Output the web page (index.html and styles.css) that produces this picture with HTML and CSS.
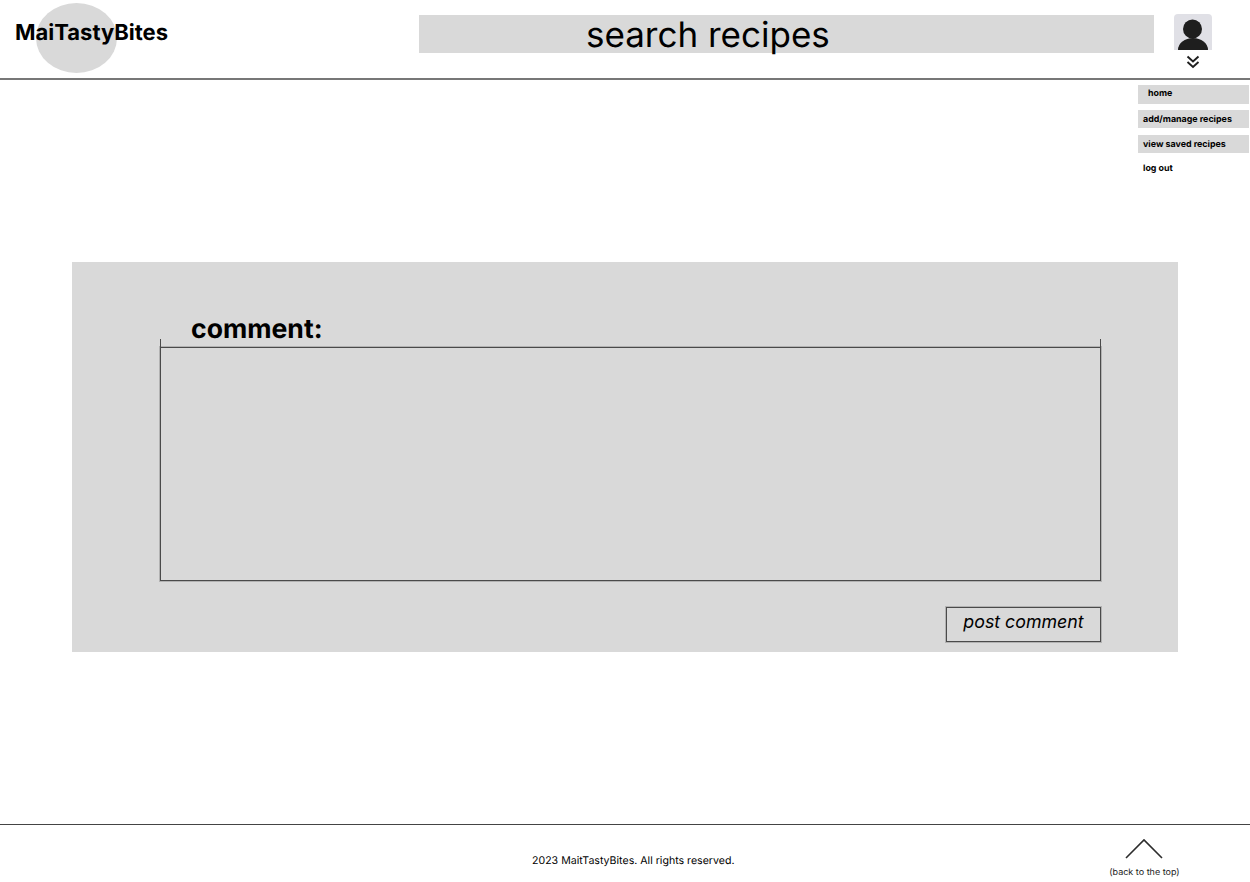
FILE: index.html
```html
<!DOCTYPE html>
<html lang="en">
  <head>
    <meta charset="UTF-8" />
    <title>MaiTastyBites</title>
    <link rel="stylesheet" href="styles.css">
  </head>
  <body>
    <header>
      <div class="logo">
        <span class="logo-circle"></span>
        <h1>MaiTastyBites</h1>
      </div>
      <div class="search">search recipes</div>
      <div class="account">
        <div class="avatar">
          <svg width="38" height="36" viewBox="0 0 38 36">
            <circle cx="18.5" cy="15" r="9.5" fill="#1e1e1e" />
            <path d="M4 36 A15 12 0 0 1 34 36 Z" fill="#1e1e1e" />
          </svg>
        </div>
        <svg class="chevrons" width="14" height="14" viewBox="0 0 14 14" fill="none" stroke="#1e1e1e" stroke-width="1.9">
          <path d="M1.5 1.5 L7 6.5 L12.5 1.5" />
          <path d="M1.5 7 L7 12 L12.5 7" />
        </svg>
      </div>
    </header>

    <nav class="menu">
      <a class="menu-item menu-home">home</a>
      <a class="menu-item">add/manage recipes</a>
      <a class="menu-item">view saved recipes</a>
      <a class="menu-item menu-plain">log out</a>
    </nav>

    <main>
      <section class="panel">
        <h2>comment:</h2>
        <div class="comment-box"></div>
        <div class="panel-actions">
          <button>post comment</button>
        </div>
      </section>
    </main>

    <footer>
      <p class="copyright">2023 MaitTastyBites. All rights reserved.</p>
      <a class="back-top">
        <svg width="38" height="21" viewBox="0 0 38 21" fill="none" stroke="#2c2c2c" stroke-width="1.6">
          <path d="M1 20 L19 2 L37 20" />
        </svg>
        <span>(back to the top)</span>
      </a>
    </footer>
  </body>
</html>
```

FILE: styles.css
```css
* {
  margin: 0;
  padding: 0;
  box-sizing: border-box;
}

body {
  font-family: Inter, "Liberation Sans", sans-serif;
  text-rendering: geometricPrecision;
  background-color: #fff;
  color: #000;
  height: 100vh;
  overflow: hidden;
  display: flex;
  flex-direction: column;
  position: relative;
}

header {
  height: 80px;
  flex-shrink: 0;
  border-bottom: 2px solid #777;
  display: flex;
  position: relative;
}

.logo {
  width: 419px;
  position: relative;
  flex-shrink: 0;
  padding: 18px 0 0 15px;
}

.logo-circle {
  position: absolute;
  left: 36px;
  top: 3px;
  width: 81px;
  height: 70px;
  border-radius: 50%;
  background-color: #d9d9d9;
}

h1 {
  position: relative;
  font-size: 22px;
  line-height: 30px;
  font-weight: 700;
}

.search {
  width: 735px;
  height: 38px;
  margin-top: 15px;
  padding-left: 167px;
  background-color: #d9d9d9;
  font-size: 35px;
  line-height: 40px;
}

.account {
  margin: 14px 0 0 20px;
  width: 38px;
  display: flex;
  flex-direction: column;
  align-items: center;
  gap: 5px;
}

.avatar {
  width: 38px;
  height: 36px;
  border-radius: 4px 4px 0 0;
  background-color: #e0e0e6;
  overflow: hidden;
}

.avatar svg,
.chevrons {
  display: block;
}

.menu {
  position: absolute;
  top: 85px;
  left: 1138px;
  width: 111px;
  display: flex;
  flex-direction: column;
}

.menu-item {
  height: 18px;
  margin-bottom: 7px;
  padding-left: 5px;
  background-color: #d9d9d9;
  font-size: 8.9px;
  font-weight: 700;
  line-height: 19px;
}

.menu-home {
  height: 19px;
  margin-bottom: 6px;
  padding-left: 10px;
  line-height: 17px;
}

.menu-plain {
  background: none;
  line-height: 17px;
}

main {
  flex: 1;
  padding: 182px 72px 0;
}

.panel {
  height: 390px;
  background-color: #d9d9d9;
  padding: 50px 77px 0 88px;
}

h2 {
  font-size: 26.6px;
  line-height: 34px;
  font-weight: 700;
  padding-left: 31px;
}

/* soft 1px halo because the original lines sit between pixels */
.comment-box {
  height: 234px;
  border: 1px solid #4a4a4a;
  box-shadow: 0 0 0 1px rgba(0, 0, 0, 0.18);
  position: relative;
  margin-top: 1px;
}

/* little ticks sticking up past the top edge */
.comment-box::before,
.comment-box::after {
  content: "";
  position: absolute;
  top: -9px;
  width: 1px;
  height: 8px;
  background-color: #4a4a4a;
}

.comment-box::before {
  left: -1px;
}

.comment-box::after {
  right: -1px;
}

.panel-actions {
  display: flex;
  justify-content: flex-end;
  margin-top: 26px;
}

button {
  width: 155px;
  height: 35px;
  border: 1px solid #4a4a4a;
  box-shadow: 0 0 0 1px rgba(0, 0, 0, 0.18);
  background: none;
  font-family: inherit;
  font-size: 17.8px;
  font-style: italic;
  color: #000;
  line-height: 27px;
  padding-bottom: 7px;
}

footer {
  height: 58px;
  flex-shrink: 0;
  border-top: 1px solid #444;
  position: relative;
  display: flex;
  padding-left: 532px;
}

.copyright {
  font-size: 10.6px;
  line-height: 14px;
  margin-top: 29px;
}

.back-top {
  margin: 13px 0 0 374px;
  width: 72px;
  display: flex;
  flex-direction: column;
  align-items: center;
  font-size: 9px;
  line-height: 11px;
  gap: 8px;
  white-space: nowrap;
  color: #222;
}

.back-top svg {
  display: block;
}
```
